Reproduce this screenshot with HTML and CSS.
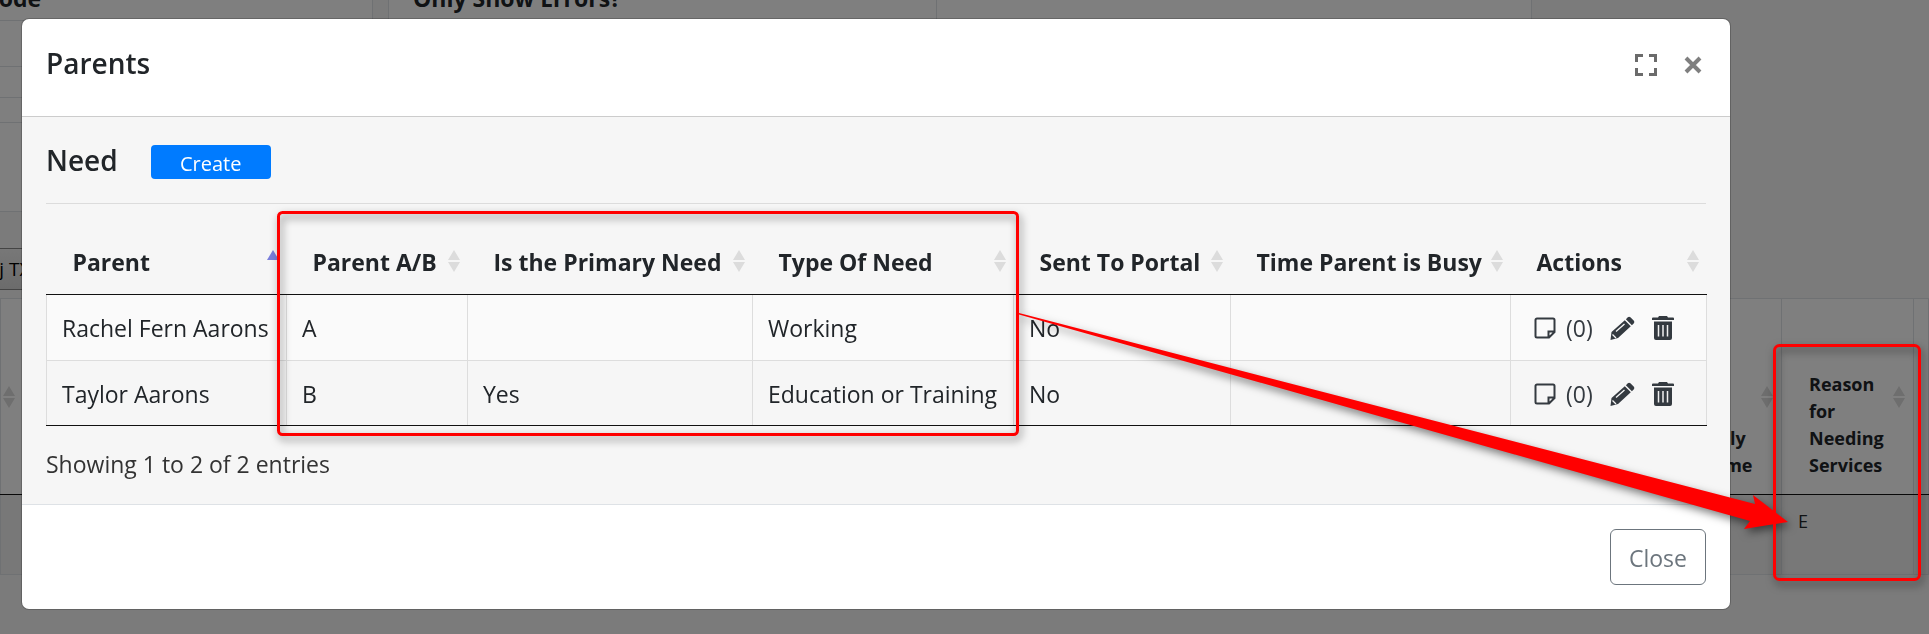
FILE: index.html
```html
<!DOCTYPE html>
<html lang="en">
<head>
  <meta charset="UTF-8" />
  <meta name="viewport" content="width=device-width, initial-scale=1.0" />
  <title>Parents</title>
  <link rel="stylesheet" href="styles.css">
</head>
<body>
  <main class="page">
    <div class="filters">
      <div class="filter filter-code"><b>Code</b></div>
      <div class="filter filter-errors"><b>Only Show Errors?</b></div>
      <div class="filter filter-rest"></div>
    </div>
    <div class="options">
      <div class="option"></div>
      <div class="option option-short"></div>
      <div class="option option-last"></div>
    </div>
    <div class="panel"></div>
    <div class="toolbar"><button type="button" class="tool-btn">Adj TX</button></div>
    <table class="report">
      <thead>
        <tr>
          <th class="r-first"><svg class="sort" viewBox="0 0 12 22"><path d="M6 0l6 10H0zM6 22l6-10H0z"/></svg></th>
          <th class="r-wide"></th>
          <th class="r-income">Family Income<svg class="sort" viewBox="0 0 12 22"><path d="M6 0l6 10H0zM6 22l6-10H0z"/></svg></th>
          <th class="r-reason">Reason for Needing Services<svg class="sort" viewBox="0 0 12 22"><path d="M6 0l6 10H0zM6 22l6-10H0z"/></svg></th>
          <th class="r-last"></th>
        </tr>
      </thead>
      <tbody>
        <tr><td></td><td></td><td></td><td>E</td><td></td></tr>
      </tbody>
    </table>
  </main>

  <div class="backdrop">
    <div class="modal" role="dialog" aria-labelledby="modal-title">
      <div class="modal-header">
        <h2 id="modal-title">Parents</h2>
        <div class="modal-tools">
          <button type="button" class="icon-btn" aria-label="Full screen">
            <svg width="22" height="22" viewBox="0 0 22 22"><path d="M1.500 8V1.500H8M14 1.500h6.500V8M20.500 14v6.500H14M8 20.500H1.500V14" fill="none" stroke="#6b6b6b" stroke-width="3"/></svg>
          </button>
          <button type="button" class="icon-btn" aria-label="Close window">
            <svg width="18" height="18" viewBox="0 0 18 18"><path d="M2 2l14 14M16 2L2 16" fill="none" stroke="#7f7f7f" stroke-width="4"/></svg>
          </button>
        </div>
      </div>

      <div class="modal-body">
        <div class="section-head">
          <h2>Need</h2>
          <button type="button" class="create-btn">Create</button>
        </div>
        <table class="needs">
          <colgroup>
            <col class="c-parent"><col class="c-ab"><col class="c-primary"><col class="c-type"><col class="c-portal"><col class="c-busy"><col class="c-actions">
          </colgroup>
          <thead>
            <tr>
              <th>Parent<svg class="sort sort-asc" viewBox="0 0 12 22"><path d="M6 0l6 10H0z"/></svg></th>
              <th>Parent A/B<svg class="sort" viewBox="0 0 12 22"><path d="M6 0l6 10H0zM6 22l6-10H0z"/></svg></th>
              <th>Is the Primary Need<svg class="sort" viewBox="0 0 12 22"><path d="M6 0l6 10H0zM6 22l6-10H0z"/></svg></th>
              <th>Type Of Need<svg class="sort" viewBox="0 0 12 22"><path d="M6 0l6 10H0zM6 22l6-10H0z"/></svg></th>
              <th>Sent To Portal<svg class="sort" viewBox="0 0 12 22"><path d="M6 0l6 10H0zM6 22l6-10H0z"/></svg></th>
              <th>Time Parent is Busy<svg class="sort" viewBox="0 0 12 22"><path d="M6 0l6 10H0zM6 22l6-10H0z"/></svg></th>
              <th>Actions<svg class="sort" viewBox="0 0 12 22"><path d="M6 0l6 10H0zM6 22l6-10H0z"/></svg></th>
            </tr>
          </thead>
          <tbody>
            <tr>
              <td>Rachel Fern Aarons</td>
              <td>A</td>
              <td></td>
              <td>Working</td>
              <td>No</td>
              <td></td>
              <td>
                <div class="actions">
                  <button type="button" class="icon-btn note-btn" aria-label="Notes"><svg width="22" height="22"><use href="#note"/></svg><span>(0)</span></button>
                  <button type="button" class="icon-btn" aria-label="Edit"><svg width="25" height="24"><use href="#pencil"/></svg></button>
                  <button type="button" class="icon-btn" aria-label="Delete"><svg width="22" height="24"><use href="#trash"/></svg></button>
                </div>
              </td>
            </tr>
            <tr>
              <td>Taylor Aarons</td>
              <td>B</td>
              <td>Yes</td>
              <td>Education or Training</td>
              <td>No</td>
              <td></td>
              <td>
                <div class="actions">
                  <button type="button" class="icon-btn note-btn" aria-label="Notes"><svg width="22" height="22"><use href="#note"/></svg><span>(0)</span></button>
                  <button type="button" class="icon-btn" aria-label="Edit"><svg width="25" height="24"><use href="#pencil"/></svg></button>
                  <button type="button" class="icon-btn" aria-label="Delete"><svg width="22" height="24"><use href="#trash"/></svg></button>
                </div>
              </td>
            </tr>
          </tbody>
        </table>
        <p class="info">Showing 1 to 2 of 2 entries</p>
      </div>

      <div class="modal-footer">
        <button type="button" class="close-btn">Close</button>
      </div>
    </div>
  </div>

  <!-- callouts drawn over the window -->
  <svg class="callouts" width="1929" height="634" viewBox="0 0 1929 634">
    <rect x="278.500" y="212.500" width="739" height="222" rx="4"/>
    <rect x="1774.500" y="345.500" width="145" height="234" rx="5"/>
    <path d="M1019 313L1755 504L1753 495L1788 522L1744 529L1750 521L1019 314.500z"/>
  </svg>

  <svg class="icon-defs" width="0" height="0">
    <symbol id="note" viewBox="0 0 22 22">
      <path d="M3 1.500h16a1.500 1.500 0 0 1 1.500 1.500v12l-5.500 5.500H3A1.500 1.500 0 0 1 1.500 19V3A1.500 1.500 0 0 1 3 1.500zM20 14.500h-5.500V20" fill="none" stroke="#343a40" stroke-width="2"/>
    </symbol>
    <symbol id="pencil" viewBox="0 0 25 24">
      <path d="M17.800 1.300q1.300-1.300 2.600 0l3.500 3.500q1 1.200 0 2.400l-2 2-6-6zM14.800 4.300l6 6L8 22 .5 24l1-8z" fill="#343a40"/>
      <path d="M6 15.500L14.500 8M2.500 18.500l3.500 3.500" fill="none" stroke="#f7f7f7" stroke-width="1.300"/>
    </symbol>
    <symbol id="trash" viewBox="0 0 22 24">
      <path d="M7 0h8l1 1.500h5q1 0 1 1V4H0V2.500q0-1 1-1h5zM2 5.500h18V22q0 2-2 2H4q-2 0-2-2z" fill="#343a40"/>
      <path d="M6.500 9v11.500M11 9v11.500M15.500 9v11.500" stroke="#f0f0f0" stroke-width="1.500"/>
    </symbol>
  </svg>
</body>
</html>
```
FILE: styles.css
```css
* {
  box-sizing: border-box;
}
body {
  margin: 0;
  min-height: 100vh;
  overflow: hidden;
  background: #f6f6f6;
  color: #212529;
  font-family: "Segoe UI", "Open Sans", "Noto Sans", sans-serif;
  font-size: 23px;
  line-height: 36px;
}
h2 {
  margin: 0;
  font-size: 28px;
  font-weight: 600;
  line-height: 36px;
}
button {
  font-family: inherit;
  cursor: pointer;
}

/* page behind the dialog */
.filters {
  display: flex;
  height: 21px;
}
.filter {
  background: #fff;
  border: 1px solid #dee2e6;
  border-top: 0;
  line-height: 36px;
}
.filter b {
  display: block;
  margin-top: -20px;
}
.filter-code {
  width: 373px;
  border-left: 0;
}
.filter-code b {
  margin-left: -16px;
}
.filter-errors {
  width: 549px;
  margin-left: 15px;
  padding-left: 24px;
}
.filter-rest {
  width: 595px;
  border-left: 0;
}
.options {
  width: 373px;
  background: #fff;
}
.option {
  height: 46px;
  border-bottom: 1px solid #dee2e6;
}
.option-short {
  height: 31px;
}
.option-last {
  height: 25px;
}
.panel {
  width: 373px;
  height: 89px;
  background: #fff;
  border-bottom: 1px solid #dee2e6;
}
.toolbar {
  padding: 36px 0 8px;
}
.tool-btn {
  display: block;
  width: 110px;
  height: 42px;
  margin-left: -52px;
  background: linear-gradient(#f0f0f0, #d8d8d8);
  border: 1px solid #888;
  font-size: 19px;
}
.report {
  width: 100%;
  table-layout: fixed;
  border-collapse: collapse;
  font-size: 18px;
  line-height: 27px;
}
.report th {
  position: relative;
  height: 196px;
  padding: 0 27px 15px;
  background: #fff;
  border: 1px solid #dee2e6;
  border-bottom: 1px solid #111;
  text-align: left;
  vertical-align: bottom;
}
.report td {
  height: 80px;
  padding: 13px 16px;
  background: #f1f1f1;
  border: 1px solid #dee2e6;
  border-top: 0;
  vertical-align: top;
}
.report .r-income {
  width: 120px;
  padding-left: 24px;
}
.r-reason {
  width: 132px;
}
.report .r-first {
  width: 23px;
  padding: 0;
}
.report .r-last {
  width: 15px;
  padding: 0;
}

.sort {
  position: absolute;
  top: 50%;
  right: 8px;
  width: 12px;
  height: 22px;
  margin-top: -11px;
  fill: #dcdcdc;
}
.sort-asc {
  fill: #7a7fdc;
}

/* dialog */
.backdrop {
  position: fixed;
  inset: 0;
  padding: 19px 199px 0 22px;
  background: rgba(0, 0, 0, 0.5);
}
.modal {
  background: #fff;
  border-radius: 7px;
  box-shadow: 0 0 0 1px rgba(0, 0, 0, 0.2);
}
.modal-header {
  display: flex;
  justify-content: space-between;
  height: 98px;
  padding: 26px 24px;
  border-bottom: 1px solid #ccc;
}
.modal-tools {
  display: flex;
  align-items: center;
  gap: 27px;
  height: 40px;
  padding-right: 4px;
}
.icon-btn {
  display: flex;
  padding: 0;
  background: none;
  border: 0;
}
.modal-body {
  padding: 25px 24px 22px;
  background: #f6f6f6;
}
.section-head {
  display: flex;
  gap: 33px;
  height: 62px;
  border-bottom: 1px solid #dcdcdc;
}
.create-btn {
  width: 120px;
  height: 34px;
  margin-top: 3px;
  padding: 2px 0 0;
  background: #007bff;
  border: 0;
  border-radius: 4px;
  color: #fff;
  font-size: 20px;
}
.needs {
  width: 100%;
  margin-top: 25px;
  table-layout: fixed;
  border-collapse: collapse;
}
.c-parent { width: 240px; }
.c-ab { width: 181px; }
.c-primary { width: 285px; }
.c-type { width: 261px; }
.c-portal { width: 217px; }
.c-busy { width: 280px; }
.c-actions { width: 196px; }
.needs th {
  position: relative;
  height: 65px;
  padding: 2px 0 0 26px;
  border-bottom: 1px solid #111;
  text-align: left;
  white-space: nowrap;
}
.needs td {
  height: 65px;
  padding: 2px 0 0 15px;
  border: 1px solid #ddd;
  white-space: nowrap;
}
.needs tbody tr:first-child td {
  height: 66px;
  border-top-color: #111;
  background: #fafafa;
}
.needs tbody tr:last-child td {
  border-bottom-color: #111;
}
.actions {
  display: flex;
  align-items: center;
  padding-left: 8px;
  gap: 17px;
}
.note-btn {
  align-items: center;
  gap: 10px;
  color: #343a40;
  font-size: 23px;
}
.info {
  margin: 20px 0 0;
  color: #333;
}
.modal-footer {
  display: flex;
  justify-content: flex-end;
  padding: 24px;
  border-top: 1px solid #dee2e6;
}
.close-btn {
  width: 96px;
  height: 56px;
  padding: 2px 0 0;
  background: #fff;
  border: 1px solid #6c757d;
  border-radius: 6px;
  color: #6c757d;
  font-size: 23px;
}

.callouts {
  position: absolute;
  top: 0;
  left: 0;
  pointer-events: none;
  filter: drop-shadow(2px 4px 4px rgba(0, 0, 0, 0.5));
}
.callouts rect {
  fill: none;
  stroke: #f00;
  stroke-width: 3;
}
.callouts path {
  fill: #f00;
}
.icon-defs {
  position: absolute;
}
```
